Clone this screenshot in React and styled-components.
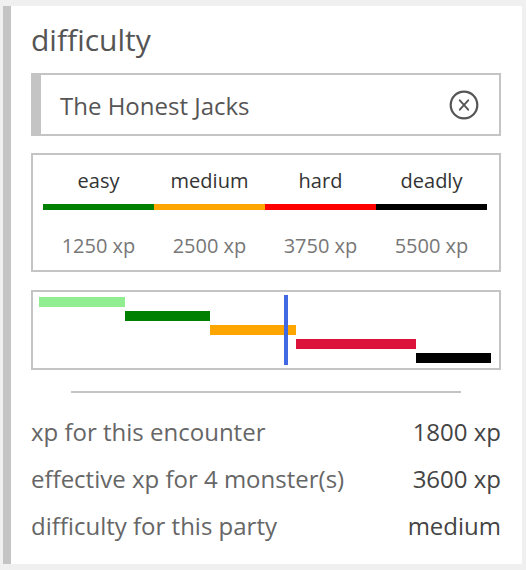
import React from 'react';
import styled, { createGlobalStyle } from 'styled-components';

const GlobalStyle = createGlobalStyle`
  html, body {
    margin: 0;
    padding: 0;
    background: #f0f0f0;
  }
  body {
    font-family: "Open Sans", "Liberation Sans", sans-serif;
  }
`;

const levels = [
  { name: 'easy', xp: 1250, color: '#008000' },
  { name: 'medium', xp: 2500, color: '#ffa500' },
  { name: 'hard', xp: 3750, color: '#ff0000' },
  { name: 'deadly', xp: 5500, color: '#000000' },
];

const chartSegments = [
  { from: 0, to: 1250, color: '#90ee90' },
  { from: 1250, to: 2500, color: '#008000' },
  { from: 2500, to: 3750, color: '#ffa500' },
  { from: 3750, to: 5500, color: '#dc143c' },
  { from: 5500, to: 6600, color: '#000000' },
];

const chartMax = 6600;
const effectiveXp = 3600;

const stats = [
  { label: 'xp for this encounter', value: '1800 xp' },
  { label: 'effective xp for 4 monster(s)', value: '3600 xp' },
  { label: 'difficulty for this party', value: 'medium' },
];

const Page = styled.div`
  padding: 6px 4px 6px 3px;
`;

const Card = styled.section`
  box-sizing: border-box;
  height: 558px;
  background: #fff;
  border-left: 8px solid #c4c4c4;
  padding: 14px 21px 0 20px;
`;

const Title = styled.h2`
  margin: 0;
  font-size: 30px;
  line-height: 40px;
  font-weight: 400;
  color: #555;
`;

const PartyBox = styled.div`
  box-sizing: border-box;
  height: 63px;
  margin-top: 13px;
  display: flex;
  align-items: center;
  justify-content: space-between;
  border: 2px solid #c4c4c4;
  border-left-width: 10px;
  padding: 0 20px 0 19px;
`;

const PartyName = styled.span`
  font-size: 24px;
  color: #555;
  padding-top: 2px;
`;

const ClearButton = styled.button`
  display: flex;
  padding: 0;
  border: 0;
  background: none;
  cursor: pointer;
`;

const Panel = styled.div`
  box-sizing: border-box;
  border: 2px solid #c4c4c4;
  margin-top: ${p => p.$gap}px;
`;

const Thresholds = styled(Panel)`
  height: 119px;
  padding: 12px 12px 0 10px;
`;

const LevelGrid = styled.div`
  display: grid;
  grid-template-columns: repeat(4, 1fr);
`;

const LevelName = styled.div`
  text-align: center;
  font-size: 20px;
  line-height: 27px;
  color: #333;
`;

const LevelBar = styled.div`
  height: 6px;
  margin-top: 10px;
  background: ${p => p.$color};
`;

const LevelXp = styled.div`
  text-align: center;
  font-size: 20px;
  line-height: 26px;
  color: #777;
  margin-top: 23px;
`;

const Chart = styled(Panel)`
  position: relative;
  height: 80px;
  padding: 5px 8px 5px 6px;
  display: flex;
  flex-direction: column;
  gap: 4px;
`;

const ChartTrack = styled.div`
  position: relative;
  height: 10px;
`;

const ChartBar = styled.div`
  height: 10px;
  background: ${p => p.$color};
`;

const Marker = styled.div`
  position: absolute;
  top: 3px;
  bottom: 3px;
  width: 4px;
  margin-left: -2px;
  background: #4169e1;
`;

const Separator = styled.hr`
  margin: 21px 40px 0;
  border: 0;
  height: 2px;
  background: #c4c4c4;
`;

const StatList = styled.div`
  margin-top: 15px;
`;

const StatRow = styled.div`
  display: flex;
  justify-content: space-between;
  align-items: center;
  height: 47px;
  font-size: 24px;
`;

const StatLabel = styled.span`
  color: #666;
`;

const StatValue = styled.span`
  color: #444;
`;

const CloseCircleIcon = () => (
  <svg width="30" height="30" viewBox="0 0 30 30" fill="none">
    <circle cx="15" cy="15" r="13.3" stroke="#555" strokeWidth="2.2" />
    <path d="M10.8 10.3 L19.2 19.7 M19.2 10.3 L10.8 19.7" stroke="#555" strokeWidth="1.9" strokeLinecap="round" />
  </svg>
);

const pct = v => `${(v / chartMax) * 100}%`;

export default function App() {
  return (
    <Page>
      <GlobalStyle />
      <Card>
        <Title>difficulty</Title>

        <PartyBox>
          <PartyName>The Honest Jacks</PartyName>
          <ClearButton aria-label="clear party">
            <CloseCircleIcon />
          </ClearButton>
        </PartyBox>

        <Thresholds $gap={17}>
          <LevelGrid>
            {levels.map(l => <LevelName key={l.name}>{l.name}</LevelName>)}
            {levels.map(l => <LevelBar key={l.name} $color={l.color} />)}
            {levels.map(l => <LevelXp key={l.name}>{l.xp} xp</LevelXp>)}
          </LevelGrid>
        </Thresholds>

        <Chart $gap={18}>
          {chartSegments.map(s => (
            <ChartTrack key={s.from}>
              <ChartBar
                $color={s.color}
                style={{ marginLeft: pct(s.from), width: pct(s.to - s.from) }}
              />
            </ChartTrack>
          ))}
          <Marker style={{ left: `calc(6px + (100% - 14px) * ${effectiveXp / chartMax})` }} />
        </Chart>

        <Separator />

        <StatList>
          {stats.map(s => (
            <StatRow key={s.label}>
              <StatLabel>{s.label}</StatLabel>
              <StatValue>{s.value}</StatValue>
            </StatRow>
          ))}
        </StatList>
      </Card>
    </Page>
  );
}
